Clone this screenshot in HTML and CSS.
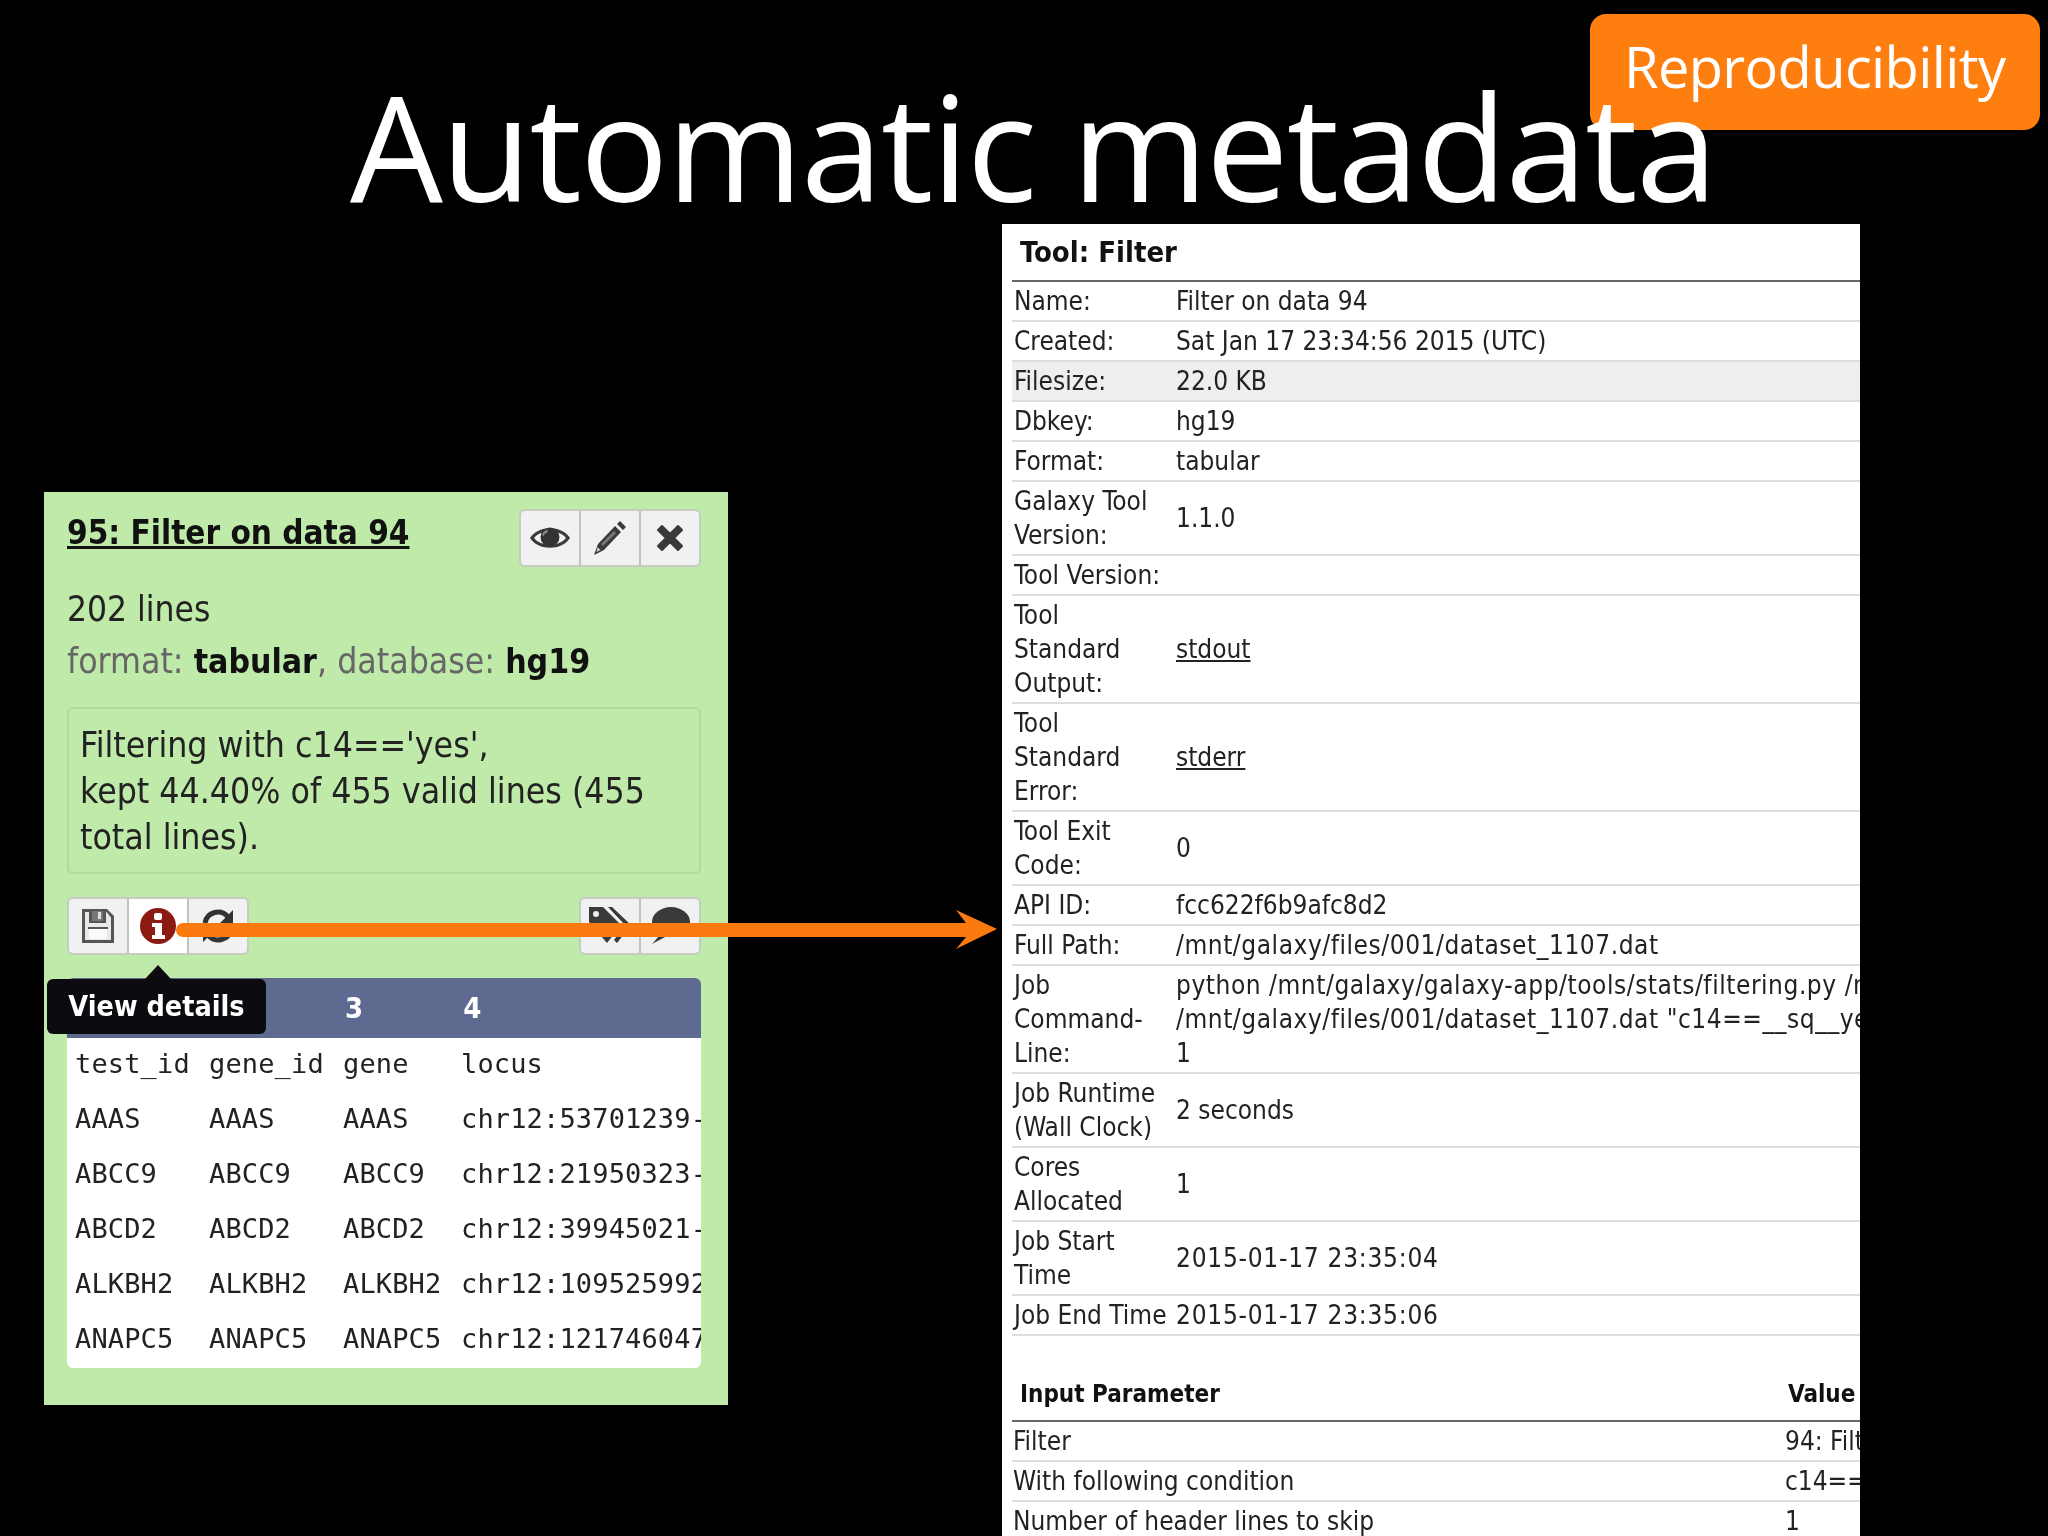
FILE: index.html
```html
<!DOCTYPE html>
<html lang="en">
<head>
  <meta charset="UTF-8">
  <title>Automatic metadata</title>
  <link rel="stylesheet" href="styles.css">
</head>
<body>
  <div class="slide">
    <div class="badge">Reproducibility</div>
    <h1 class="title">Automatic metadata</h1>

    <!-- Dataset panel -->
    <div class="dataset">
      <div class="dataset-head">
        <a class="dataset-name">95: Filter on data 94</a>
        <div class="btn-group">
          <span class="btn">
            <svg width="40" height="30" viewBox="0 0 40 30"><path fill="#3a3a3a" d="M0 15C8 2 32 2 40 15 32 28 8 28 0 15Z"/><path fill="#f2f2f2" d="M4 15C11 6 29 6 36 15 29 24 11 24 4 15Z"/><circle cx="20" cy="14" r="9.500" fill="#333"/><path fill="#8a8a8a" d="M12 12c1-3 3-5 6-5l-1 3c-2 0-3 1-3 3z"/></svg>
          </span>
          <span class="btn">
            <svg width="34" height="36" viewBox="0 0 34 36"><path fill="#3a3a3a" d="M27 1l6 6-3 3-6-6zM22 6l6 6L11 30 1 35l4-11z"/><path fill="#777" d="M21 11l2 2L10 26l-2-2z"/><path fill="#ccc" d="M4.500 27l3 3-4 2z"/></svg>
          </span>
          <span class="btn">
            <svg width="28" height="28" viewBox="0 0 28 28"><path fill="#3a3a3a" stroke="#3a3a3a" stroke-width="2" stroke-linejoin="round" d="M6 2l8 8 8-8 4 4-8 8 8 8-4 4-8-8-8 8-4-4 8-8-8-8z"/></svg>
          </span>
        </div>
      </div>

      <p class="dataset-lines">202 lines</p>
      <p class="dataset-meta">format: <b>tabular</b>, database: <b>hg19</b></p>

      <div class="dataset-info">Filtering with c14=='yes',<br>kept 44.40% of 455 valid lines (455<br>total lines).</div>

      <div class="dataset-actions">
        <div class="btn-group">
          <span class="btn">
            <svg width="34" height="36" viewBox="0 0 34 36"><path fill="#555" d="M1 1h25l7 7v27H1z"/><path fill="#e8e8e8" d="M4 4h4v11h17V4h.500L30 9.500V32H4z"/><path fill="#777" d="M11 3h11v10H11z"/><path fill="#ddd" d="M17 4h3v7h-3z"/><path fill="#555" d="M7 19h20v2H7z"/><path fill="#fafafa" d="M8 21h18v10H8z"/></svg>
          </span>
          <span class="btn active">
            <svg width="36" height="36" viewBox="0 0 36 36"><circle cx="18" cy="18" r="18" fill="#8a1a12"/><rect x="14" y="5" width="8" height="7" rx="2" fill="#fff"/><path fill="#fff" d="M12 15h10v12h3v4H12v-4h3v-8h-3z"/></svg>
          </span>
          <span class="btn">
            <svg width="36" height="36" viewBox="0 0 36 36"><path fill="none" stroke="#333" stroke-width="5" d="M5 15A13 13 0 0 1 28 9M31 21A13 13 0 0 1 8 27"/><path fill="#333" d="M33 2v13H20zM3 34V21h13z"/></svg>
          </span>
        </div>
        <div class="btn-group">
          <span class="btn">
            <svg width="42" height="40" viewBox="0 0 42 40"><path fill="#3a3a3a" d="M0 1h14l18 18-14 18L0 16zM19 1h4l19 18-14 18-3-3 11-15z"/><circle cx="7" cy="8" r="3" fill="#eee"/></svg>
          </span>
          <span class="btn">
            <svg width="40" height="38" viewBox="0 0 40 38"><ellipse cx="21" cy="15" rx="19" ry="15" fill="#3a3a3a"/><path fill="#3a3a3a" d="M11 25l6 4-15 8c3-3 7-8 9-12z"/></svg>
          </span>
        </div>
      </div>

      <div class="peek">
        <div class="peek-head">
          <span class="peek-col3">3</span>
          <span class="peek-col4">4</span>
        </div>
        <table class="peek-table">
          <tr><td>test_id</td><td>gene_id</td><td>gene</td><td>locus</td></tr>
          <tr><td>AAAS</td><td>AAAS</td><td>AAAS</td><td>chr12:53701239-53718</td></tr>
          <tr><td>ABCC9</td><td>ABCC9</td><td>ABCC9</td><td>chr12:21950323-22089</td></tr>
          <tr><td>ABCD2</td><td>ABCD2</td><td>ABCD2</td><td>chr12:39945021-39999</td></tr>
          <tr><td>ALKBH2</td><td>ALKBH2</td><td>ALKBH2</td><td>chr12:109525992-10953</td></tr>
          <tr><td>ANAPC5</td><td>ANAPC5</td><td>ANAPC5</td><td>chr12:121746047-12179</td></tr>
        </table>
      </div>

      <div class="tooltip">View details</div>
    </div>

    <!-- Dataset details page -->
    <div class="details">
      <table class="details-table">
        <colgroup><col class="col-label"><col></colgroup>
        <tr class="head"><th colspan="2">Tool: Filter</th></tr>
        <tr><td>Name:</td><td>Filter on data 94</td></tr>
        <tr><td>Created:</td><td>Sat Jan 17 23:34:56 2015 (UTC)</td></tr>
        <tr class="hover"><td>Filesize:</td><td>22.0 KB</td></tr>
        <tr><td>Dbkey:</td><td>hg19</td></tr>
        <tr><td>Format:</td><td>tabular</td></tr>
        <tr><td>Galaxy Tool<br>Version:</td><td>1.1.0</td></tr>
        <tr><td>Tool Version:</td><td></td></tr>
        <tr><td>Tool<br>Standard<br>Output:</td><td><a>stdout</a></td></tr>
        <tr><td>Tool<br>Standard<br>Error:</td><td><a>stderr</a></td></tr>
        <tr><td>Tool Exit<br>Code:</td><td>0</td></tr>
        <tr><td>API ID:</td><td>fcc622f6b9afc8d2</td></tr>
        <tr><td>Full Path:</td><td class="path">/mnt/galaxy/files/001/dataset_1107.dat</td></tr>
        <tr><td>Job<br>Command-<br>Line:</td><td class="path">python /mnt/galaxy/galaxy-app/tools/stats/filtering.py /mnt/galaxy/files/001/dataset_1090.dat<br>/mnt/galaxy/files/001/dataset_1107.dat "c14==__sq__yes__sq__"<br>1</td></tr>
        <tr><td>Job Runtime<br>(Wall Clock)</td><td>2 seconds</td></tr>
        <tr><td>Cores<br>Allocated</td><td>1</td></tr>
        <tr><td>Job Start<br>Time</td><td class="stamp">2015-01-17 23:35:04</td></tr>
        <tr><td>Job End Time</td><td class="stamp">2015-01-17 23:35:06</td></tr>
      </table>

      <table class="params-table">
        <colgroup><col class="col-param"><col></colgroup>
        <tr class="head"><th>Input Parameter</th><th>Value</th></tr>
        <tr><td>Filter</td><td>94: Filter on data 93</td></tr>
        <tr><td>With following condition</td><td>c14=='yes'</td></tr>
        <tr><td>Number of header lines to skip</td><td>1</td></tr>
      </table>
    </div>

    <svg class="arrow" width="830" height="44" viewBox="0 0 830 44">
      <path fill="#fb7a10" d="M7 15H790L780 2 821 21 780 41 790 29H7A7 7 0 0 1 7 15Z"/>
    </svg>
  </div>
</body>
</html>
```

FILE: styles.css
```css
body {
  margin: 0;
  background: #000;
}

.slide {
  position: relative;
  width: 2048px;
  height: 1536px;
  overflow: hidden;
  background: #000;
  font-family: "DejaVu Sans", sans-serif;
}

.title {
  position: absolute;
  left: 350px;
  top: 45px;
  margin: 0;
  font-family: "Open Sans", sans-serif;
  font-size: 147px;
  font-weight: 400;
  line-height: 200px;
  letter-spacing: -1.8px;
  white-space: nowrap;
  color: #fff;
}

.badge {
  position: absolute;
  left: 1590px;
  top: 14px;
  width: 450px;
  height: 116px;
  box-sizing: border-box;
  padding: 14px 0 0 34px;
  border-radius: 16px;
  background: #fe7e10;
  font-family: "Open Sans", sans-serif;
  font-size: 56px;
  line-height: 76px;
  letter-spacing: -0.65px;
  color: #fff;
}

/* dataset panel */
.dataset {
  position: absolute;
  left: 44px;
  top: 492px;
  width: 684px;
  height: 913px;
  box-sizing: border-box;
  padding: 17px 27px 0 23px;
  background: #bfeaa9;
  color: #222;
  font-size: 35px;
  font-stretch: condensed;
  filter: blur(0.7px);
}

.dataset-head {
  display: flex;
  justify-content: space-between;
  align-items: flex-start;
  height: 58px;
}

.dataset-name {
  margin-top: 4px;
  font-weight: bold;
  font-size: 33px;
  line-height: 40px;
  text-decoration: underline;
  color: #111;
}

.btn-group {
  display: flex;
  border: 2px solid #c4cdc0;
  border-radius: 6px;
  background: #f1f1f1;
}

.btn {
  display: flex;
  align-items: center;
  justify-content: center;
  width: 58px;
  height: 54px;
  border-left: 2px solid #c0c4bd;
}

.btn:first-child {
  border-left: none;
  border-radius: 5px 0 0 5px;
}

.btn.active {
  background: #fff;
}

.dataset-lines {
  margin: 19px 0 0;
  line-height: 46px;
}

.dataset-meta {
  margin: 6px 0 0;
  font-size: 35.3px;
  line-height: 46px;
  color: #666;
}

.dataset-meta b {
  font-size: 33.5px;
  color: #111;
}

.dataset-info {
  box-sizing: border-box;
  height: 167px;
  margin-top: 22px;
  padding: 13px 11px 0;
  border: 2px solid #aedb9a;
  border-radius: 6px;
  font-size: 35.3px;
  line-height: 46px;
}

.dataset-actions {
  display: flex;
  justify-content: space-between;
  margin-top: 23px;
}

.peek {
  margin-top: 23px;
  border-radius: 6px;
  background: #fff;
  overflow: hidden;
}

.peek-head {
  display: flex;
  height: 60px;
  align-items: center;
  background: #5f6a91;
  font-size: 29px;
  font-weight: bold;
  color: #fff;
}

.peek-col3 {
  margin-left: 278px;
}

.peek-col4 {
  margin-left: 100px;
}

.peek-table {
  border-collapse: collapse;
  table-layout: fixed;
  width: 634px;
  font-family: "DejaVu Sans Mono", monospace;
  font-size: 27px;
  letter-spacing: 0.15px;
  color: #222;
}

.peek-table td {
  height: 50px;
  padding: 0 0 5px 8px;
  white-space: nowrap;
  overflow: hidden;
}

.peek-table td:nth-child(1) { width: 126px; }
.peek-table td:nth-child(2) { width: 126px; }
.peek-table td:nth-child(3) { width: 110px; }

.tooltip {
  position: absolute;
  left: 3px;
  top: 487px;
  width: 219px;
  height: 55px;
  border-radius: 6px;
  background: #0b0b10;
  font-size: 28.5px;
  font-weight: bold;
  line-height: 56px;
  text-align: center;
  color: #fff;
}

.tooltip::before {
  content: "";
  position: absolute;
  left: 98px;
  top: -14px;
  border: solid transparent;
  border-width: 0 13px 14px;
  border-bottom-color: #0b0b10;
}

/* details page */
.details {
  position: absolute;
  left: 1002px;
  top: 224px;
  width: 858px;
  height: 1312px;
  box-sizing: border-box;
  padding-left: 10px;
  overflow: hidden;
  background: #fff;
  color: #222;
  font-size: 26px;
  font-stretch: condensed;
  filter: blur(0.7px);
}

.details table {
  border-collapse: collapse;
  table-layout: fixed;
  width: 848px;
}

.col-label {
  width: 162px;
}

.col-param {
  width: 771px;
}

.details th {
  height: 56px;
  padding: 0 8px;
  border-bottom: 2px solid #666;
  font-size: 29px;
  font-weight: bold;
  text-align: left;
  white-space: nowrap;
  color: #111;
}

.details td {
  padding: 2px;
  border-bottom: 2px solid #ddd;
  line-height: 34px;
  white-space: nowrap;
  overflow: hidden;
}

.details-table .hover td {
  background: #eee;
}

.details a {
  text-decoration: underline;
}

.details td.path {
  letter-spacing: 0.55px;
}

.details td.stamp {
  letter-spacing: 0.75px;
}

.params-table {
  margin-top: 28px;
}

.params-table th {
  height: 52px;
  padding-top: 4px;
  font-size: 24px;
}

.params-table th:last-child {
  padding-left: 5px;
}

.params-table td:first-child {
  padding-left: 1px;
}

.arrow {
  position: absolute;
  left: 176px;
  top: 908px;
}
```
